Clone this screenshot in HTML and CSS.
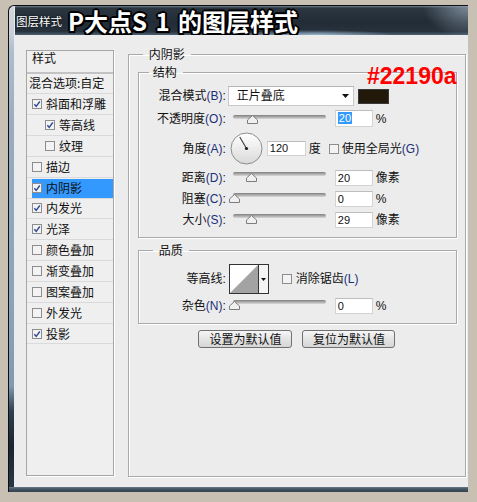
FILE: index.html
```html
<!DOCTYPE html>
<html lang="zh-CN">
<head>
<meta charset="utf-8">
<title>图层样式</title>
<link rel="stylesheet" href="styles.css">
</head>
<body>
<div class="window">
  <div class="frame-left"></div>
  <div class="titlebar">
    <span class="title-small">图层样式</span>
    <span class="title-big">P大点S 1 的图层样式</span>
  </div>
  <div class="client">
    <div class="styles-list">
      <div class="list-head">样式</div>
      <div class="list-item plain">混合选项:自定</div>
      <div class="list-item"><svg class="cb" viewBox="0 0 10 10"><rect class="cb-box" x="0.5" y="0.5" width="9" height="9"/><path class="cb-mark" d="M2.3 5.2 L4.2 7.3 L7.8 2.5"/></svg>斜面和浮雕</div>
      <div class="list-item sub"><svg class="cb" viewBox="0 0 10 10"><rect class="cb-box" x="0.5" y="0.5" width="9" height="9"/><path class="cb-mark" d="M2.3 5.2 L4.2 7.3 L7.8 2.5"/></svg>等高线</div>
      <div class="list-item sub"><svg class="cb" viewBox="0 0 10 10"><rect class="cb-box" x="0.5" y="0.5" width="9" height="9"/></svg>纹理</div>
      <div class="list-item"><svg class="cb" viewBox="0 0 10 10"><rect class="cb-box" x="0.5" y="0.5" width="9" height="9"/></svg>描边</div>
      <div class="list-item active"><svg class="cb" viewBox="0 0 10 10"><rect class="cb-box" x="0.5" y="0.5" width="9" height="9"/><path class="cb-mark" d="M2.3 5.2 L4.2 7.3 L7.8 2.5"/></svg>内阴影</div>
      <div class="list-item"><svg class="cb" viewBox="0 0 10 10"><rect class="cb-box" x="0.5" y="0.5" width="9" height="9"/><path class="cb-mark" d="M2.3 5.2 L4.2 7.3 L7.8 2.5"/></svg>内发光</div>
      <div class="list-item"><svg class="cb" viewBox="0 0 10 10"><rect class="cb-box" x="0.5" y="0.5" width="9" height="9"/><path class="cb-mark" d="M2.3 5.2 L4.2 7.3 L7.8 2.5"/></svg>光泽</div>
      <div class="list-item"><svg class="cb" viewBox="0 0 10 10"><rect class="cb-box" x="0.5" y="0.5" width="9" height="9"/></svg>颜色叠加</div>
      <div class="list-item"><svg class="cb" viewBox="0 0 10 10"><rect class="cb-box" x="0.5" y="0.5" width="9" height="9"/></svg>渐变叠加</div>
      <div class="list-item"><svg class="cb" viewBox="0 0 10 10"><rect class="cb-box" x="0.5" y="0.5" width="9" height="9"/></svg>图案叠加</div>
      <div class="list-item"><svg class="cb" viewBox="0 0 10 10"><rect class="cb-box" x="0.5" y="0.5" width="9" height="9"/></svg>外发光</div>
      <div class="list-item"><svg class="cb" viewBox="0 0 10 10"><rect class="cb-box" x="0.5" y="0.5" width="9" height="9"/><path class="cb-mark" d="M2.3 5.2 L4.2 7.3 L7.8 2.5"/></svg>投影</div>
    </div>

    <fieldset class="group outer">
      <legend class="lg-outer">内阴影</legend>

      <fieldset class="group inner struct">
        <legend class="lg-struct">结构</legend>
        <div class="row r-blend">
          <span class="lbl">混合模式<span class="key">(B)</span>:</span>
          <div class="select"><span>正片叠底</span><svg class="arrow" viewBox="0 0 7 4"><path d="M0 0 H7 L3.5 4 Z"/></svg></div>
          <div class="swatch"></div>
        </div>
        <div class="row r-opacity">
          <span class="lbl">不透明度<span class="key">(O)</span>:</span>
          <div class="slider"><div class="track"></div><svg class="thumb" style="left:18px" viewBox="0 0 11 9"><path d="M5.5 0.5 L10.5 5 V8.5 H0.5 V5 Z"/></svg></div>
          <div class="num"><span class="sel">20</span></div>
          <span class="unit">%</span>
        </div>
        <div class="row r-angle">
          <span class="lbl">角度<span class="key">(A)</span>:</span>
          <svg class="dial" viewBox="0 0 33 33">
            <defs><linearGradient id="dialg" x1="0" y1="0" x2="0" y2="1"><stop offset="0" stop-color="#ffffff"/><stop offset="1" stop-color="#d9d9d9"/></linearGradient></defs>
            <circle cx="16.5" cy="16.5" r="15.5" fill="url(#dialg)" stroke="#8c8c8c"/>
            <line x1="16.5" y1="16.5" x2="9.8" y2="5" stroke="#3a3a3a" stroke-width="1.1"/>
            <circle cx="16.5" cy="16.5" r="1.6" fill="#202020"/>
          </svg>
          <div class="num angle">120</div>
          <span class="unit">度</span>
          <svg class="cb cb-global" viewBox="0 0 10 10"><rect class="cb-box" x="0.5" y="0.5" width="9" height="9"/></svg>
          <span class="cb-label">使用全局光<span class="key">(G)</span></span>
        </div>
        <div class="row r-slider">
          <span class="lbl">距离<span class="key">(D)</span>:</span>
          <div class="slider"><div class="track"></div><svg class="thumb" style="left:17px" viewBox="0 0 11 9"><path d="M5.5 0.5 L10.5 5 V8.5 H0.5 V5 Z"/></svg></div>
          <div class="num">20</div>
          <span class="unit">像素</span>
        </div>
        <div class="row r-slider">
          <span class="lbl">阻塞<span class="key">(C)</span>:</span>
          <div class="slider"><div class="track"></div><svg class="thumb" style="left:0px" viewBox="0 0 11 9"><path d="M5.5 0.5 L10.5 5 V8.5 H0.5 V5 Z"/></svg></div>
          <div class="num">0</div>
          <span class="unit">%</span>
        </div>
        <div class="row r-slider">
          <span class="lbl">大小<span class="key">(S)</span>:</span>
          <div class="slider"><div class="track"></div><svg class="thumb" style="left:17px" viewBox="0 0 11 9"><path d="M5.5 0.5 L10.5 5 V8.5 H0.5 V5 Z"/></svg></div>
          <div class="num">29</div>
          <span class="unit">像素</span>
        </div>
      </fieldset>

      <fieldset class="group inner quality">
        <legend class="lg-quality">品质</legend>
        <div class="row r-contour">
          <span class="lbl">等高线:</span>
          <div class="contour">
            <svg class="contour-curve" viewBox="0 0 28 28"><rect width="28" height="28" fill="#ffffff"/><path d="M0 28 L28 0 V28 Z" fill="#a3a3a3"/></svg>
            <div class="contour-btn"><svg class="arrow small" viewBox="0 0 5 3"><path d="M0 0 H5 L2.5 3 Z"/></svg></div>
          </div>
          <svg class="cb cb-anti" viewBox="0 0 10 10"><rect class="cb-box" x="0.5" y="0.5" width="9" height="9"/></svg>
          <span class="cb-label">消除锯齿<span class="key">(L)</span></span>
        </div>
        <div class="row r-slider">
          <span class="lbl">杂色<span class="key">(N)</span>:</span>
          <div class="slider"><div class="track"></div><svg class="thumb" style="left:0px" viewBox="0 0 11 9"><path d="M5.5 0.5 L10.5 5 V8.5 H0.5 V5 Z"/></svg></div>
          <div class="num">0</div>
          <span class="unit">%</span>
        </div>
      </fieldset>

      <div class="buttons">
        <button class="btn btn-set">设置为默认值</button>
        <button class="btn btn-reset">复位为默认值</button>
      </div>
    </fieldset>

    <div class="annotation">#22190a</div>
  </div>
  <div class="frame-bottom"></div>
</div>
</body>
</html>
```

FILE: styles.css
```css
html, body {
  margin: 0;
  padding: 0;
}

body {
  background: #c8c0b3;
  font-family: "Liberation Sans", "Noto Sans CJK SC", sans-serif;
  font-size: 12px;
  color: #111;
  width: 477px;
  height: 502px;
  overflow: hidden;
}

.window {
  margin: 5px 0 0 8px;
  width: 460px;
  height: 487px;
  display: grid;
  grid-template-columns: 7px 453px;
  grid-template-rows: 30px 452px 5px;
}

.frame-left {
  grid-row: 1 / 3;
  grid-column: 1;
  border-left: 1px solid #0d1117;
  border-top: 1px solid #0d1117;
  border-top-left-radius: 6px;
  background: linear-gradient(to bottom,
    #d3d7db 0, #c9cfd5 28px, #aebdcb 45px, #98abbf 120px,
    #8da2b7 300px, #8299ae 380px, #30404f 405px, #1a2530 440px, #2a3846 482px);
  box-shadow: inset -1px 0 0 #e8edf2;
}

.titlebar {
  grid-row: 1;
  grid-column: 2;
  border-top: 1px solid #0d1117;
  display: flex;
  align-items: center;
  background:
    radial-gradient(ellipse 80px 5px at 300px 100%, rgba(165, 195, 220, 0.85), rgba(165, 195, 220, 0)),
    radial-gradient(ellipse 45px 32px at 100% 0, rgba(150, 165, 180, 0.75), rgba(150, 165, 180, 0)),
    linear-gradient(to bottom, #72808d 0, #2b3641 2px, #222c36 55%, #27323d 88%, #4d6173 100%);
}

.title-small {
  margin-left: 1px;
  font-size: 11.5px;
  color: #ffffff;
  font-family: "Noto Sans CJK SC", sans-serif;
  line-height: 14px;
  text-shadow: 0 0 2px #000;
}

.title-big {
  margin-left: 6px;
  font-family: "Noto Sans CJK SC", "Liberation Sans", sans-serif;
  font-weight: 700;
  font-size: 24px;
  line-height: 26px;
  word-spacing: 3px;
  color: #ffffff;
  text-shadow:
    -2px 0 #000, 2px 0 #000, 0 -2px #000, 0 2px #000,
    -1.5px -1.5px #000, 1.5px -1.5px #000, -1.5px 1.5px #000, 1.5px 1.5px #000;
}

.frame-bottom {
  grid-row: 3;
  grid-column: 1 / 3;
  border-left: 1px solid #0d1117;
  background: linear-gradient(to bottom, #6a7b8b 0, #445564 2px, #34434f 100%);
}

.client {
  grid-row: 2;
  grid-column: 2;
  position: relative;
  background: #ececec;
  box-sizing: border-box;
  padding: 15px 2px 0 11px;
  display: flex;
  align-items: flex-start;
}

/* ---------- left list ---------- */
.styles-list {
  width: 88px;
  height: 426px;
  box-sizing: border-box;
  border: 1px solid #a6a6a6;
  box-shadow: 1px 1px 0 #ffffff;
  background: #efefef;
  font-family: "Noto Sans CJK SC", sans-serif;
}

.list-head {
  height: 22.5px;
  box-sizing: border-box;
  border-bottom: 2px solid #c3c3c3;
  padding-left: 5px;
  line-height: 14px;
}

.list-item {
  height: 20.85px;
  box-sizing: border-box;
  border-bottom: 1px solid #dadada;
  display: flex;
  align-items: center;
  padding-left: 5px;
  line-height: 14px;
  white-space: nowrap;
}

.list-item.plain {
  padding-left: 2px;
}

.list-item.sub {
  padding-left: 18px;
}

.list-item.active {
  background: #3399ff;
  background-clip: content-box;
  border-top: 1px solid #efefef;
}

.cb {
  width: 10px;
  height: 10px;
  flex: none;
  margin-right: 4px;
}

.cb-box {
  fill: #f3f3f3;
  stroke: #8d8d8d;
  stroke-width: 1;
}

.cb-mark {
  fill: none;
  stroke: #2f4a96;
  stroke-width: 1.4;
}

/* ---------- fieldsets ---------- */
.group {
  margin: 0;
  min-width: 0;
  border: 1px solid #a9a9a9;
  box-shadow: inset 1px 1px 0 #ffffff, 1px 1px 0 #ffffff;
}

.group legend {
  font-family: "Noto Sans CJK SC", sans-serif;
  font-size: 12px;
  line-height: 14px;
}

.outer {
  width: 339px;
  height: 430px;
  box-sizing: border-box;
  margin: -3px 0 0 14px;
  padding: 4px 9px 0 9px;
}

.lg-outer {
  margin-left: 5px;
  padding: 0 6px;
}

.inner {
  padding: 7px 0 9px 0;
  width: 319px;
  box-sizing: border-box;
}

.lg-struct {
  margin-left: 10px;
  padding: 0 6px 0 4px;
}

.quality {
  margin-top: 5px;
}

.lg-quality {
  margin-left: 14px;
  padding: 0 6px;
}

.row {
  display: flex;
  align-items: center;
  white-space: nowrap;
}

.r-blend { height: 20px; }
.r-opacity { height: 17px; margin-top: 4px; }
.r-angle { height: 33px; margin-top: 5px; }
.r-slider { height: 16px; margin-top: 5px; }
.r-contour { height: 30px; }
.r-contour + .r-slider { margin-top: 4px; }

.lbl {
  width: 87px;
  flex: none;
  text-align: right;
  line-height: 14px;
}

.key {
  color: #1d2f78;
}

.select {
  margin-left: 2px;
  width: 126px;
  height: 20px;
  box-sizing: border-box;
  border: 1px solid #c9c9c9;
  border-top-color: #b5b5b5;
  background: #ffffff;
  display: flex;
  align-items: center;
  padding: 0 4px 0 8px;
  line-height: 14px;
}

.select span {
  flex: 1;
}

.arrow {
  width: 7px;
  height: 4px;
  fill: #111;
}

.arrow.small {
  width: 5px;
  height: 3px;
}

.swatch {
  margin-left: 4px;
  width: 31px;
  height: 15px;
  box-sizing: border-box;
  background: #22190a;
  border: 1px solid #3a3a3a;
}

.slider {
  position: relative;
  margin-left: 3px;
  width: 101px;
  height: 16px;
  flex: none;
}

.track {
  position: absolute;
  left: 4px;
  right: 4px;
  top: 2px;
  height: 4px;
  border-radius: 3px;
  background: linear-gradient(to bottom, #7f7f7f, #b4b4b4 60%, #d9d9d9);
}

.r-opacity .track { top: 4px; }
.r-opacity .thumb { top: 4px; }

.thumb {
  position: absolute;
  top: 3px;
  width: 11px;
  height: 9px;
  fill: #f0f0f0;
  stroke: #7c7c7c;
  stroke-width: 1;
}

.num {
  margin-left: 5px;
  width: 38px;
  height: 16px;
  box-sizing: border-box;
  border: 1px solid #d3d3d3;
  border-top-color: #bdbdbd;
  background: #ffffff;
  font-size: 11px;
  line-height: 14px;
  padding-left: 2px;
  color: #111;
}

.r-opacity .num {
  height: 17px;
  line-height: 15px;
}

.sel {
  background: #3399ff;
  color: #ffffff;
  padding: 0 1px;
}

.num.angle {
  margin-left: 4px;
  width: 39px;
  height: 15px;
  line-height: 13px;
}

.unit {
  margin-left: 3px;
  line-height: 14px;
}

.dial {
  margin-left: 4px;
  width: 33px;
  height: 33px;
  flex: none;
}

.cb-global {
  margin-left: 8px;
  margin-right: 3px;
}

.cb-label {
  line-height: 14px;
}

.contour {
  margin-left: 3px;
  width: 40px;
  height: 30px;
  box-sizing: border-box;
  border: 1px solid #333333;
  display: flex;
  background: #ffffff;
}

.contour-curve {
  width: 28px;
  height: 28px;
  flex: none;
}

.contour-btn {
  flex: 1;
  border-left: 1px solid #333333;
  background: #f4f4f4;
  display: flex;
  align-items: center;
  justify-content: center;
}

.cb-anti {
  margin-left: 13px;
  margin-right: 4px;
}

.buttons {
  margin-top: 6px;
  display: flex;
  justify-content: center;
  gap: 10px;
}

.btn {
  height: 18px;
  padding: 0;
  box-sizing: border-box;
  border: 1px solid #707070;
  border-radius: 3px;
  background: linear-gradient(to bottom, #f6f6f6, #e4e4e4 50%, #d6d6d6);
  font-family: "Noto Sans CJK SC", sans-serif;
  font-size: 12px;
  line-height: 14px;
  color: #111;
}

.btn-set { width: 94px; }
.btn-reset { width: 93px; }

.annotation {
  position: absolute;
  left: 352px;
  top: 30px;
  font-family: "Liberation Sans", sans-serif;
  font-weight: 700;
  font-size: 23px;
  line-height: 23px;
  color: #ff0000;
}
```
